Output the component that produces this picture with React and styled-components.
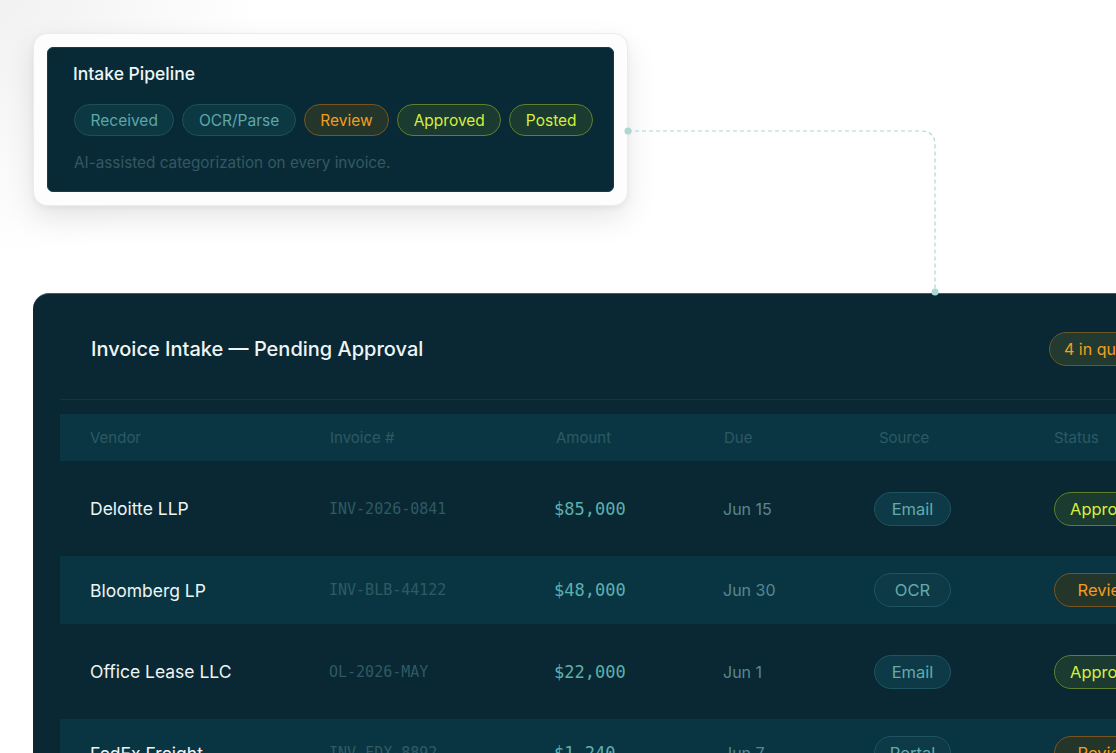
import React from "react";
import styled, {createGlobalStyle} from "styled-components";

const rows = [
    {vendor: "Deloitte LLP", invoice: "INV-2026-0841", amount: "$85,000", due: "Jun 15", source: "Email", status: "Approved"},
    {vendor: "Bloomberg LP", invoice: "INV-BLB-44122", amount: "$48,000", due: "Jun 30", source: "OCR", status: "Review"},
    {vendor: "Office Lease LLC", invoice: "OL-2026-MAY", amount: "$22,000", due: "Jun 1", source: "Email", status: "Approved"},
    {vendor: "FedEx Freight", invoice: "INV-FDX-8892", amount: "$1,240", due: "Jun 7", source: "Portal", status: "Review"},
];

const stages = [
    {label: "Received", tone: "teal"},
    {label: "OCR/Parse", tone: "teal"},
    {label: "Review", tone: "amber"},
    {label: "Approved", tone: "lime"},
    {label: "Posted", tone: "lime"},
];

const tones = {
    teal: {border: "#1d4f5a", bg: "#0c3843", color: "#5ea7a8"},
    amber: {border: "#7a5420", bg: "#243529", color: "#f39d1f"},
    lime: {border: "#5f7f2c", bg: "#1b3a30", color: "#d6ef3c"},
};

const statusTone = {Approved: "lime", Review: "amber"};

export default function App() {
    return (
        <>
            <GlobalStyle/>
            <Page>
                <Connector width="1116" height="300" viewBox="0 0 1116 300">
                    <path d="M628 131 H921 Q935 131 935 145 V292" fill="none" stroke="#a9d9d1" strokeWidth="1.2" strokeDasharray="4 3"/>
                    <circle cx="628" cy="131" r="3.5" fill="#a9d9d1"/>
                    <circle cx="935" cy="292" r="3.5" fill="#a9d9d1"/>
                </Connector>

                <PipelineFrame>
                    <PipelineCard>
                        <PipelineTitle>Intake Pipeline</PipelineTitle>
                        <PillRow>
                            {stages.map(s => <Pill key={s.label} tone={s.tone}>{s.label}</Pill>)}
                        </PillRow>
                        <Caption>AI-assisted categorization on every invoice.</Caption>
                    </PipelineCard>
                </PipelineFrame>

                <Panel>
                    <PanelHeader>
                        <PanelTitle>Invoice Intake — Pending Approval</PanelTitle>
                        <QueueBadge>4 in queue</QueueBadge>
                    </PanelHeader>

                    <TableHead>
                        <span>Vendor</span>
                        <span>Invoice #</span>
                        <span>Amount</span>
                        <span>Due</span>
                        <span>Source</span>
                        <span>Status</span>
                    </TableHead>

                    {rows.map((r, i) => (
                        <Row key={r.invoice} striped={i % 2 === 1}>
                            <Vendor>{r.vendor}</Vendor>
                            <InvoiceNo>{r.invoice}</InvoiceNo>
                            <Amount>{r.amount}</Amount>
                            <Due>{r.due}</Due>
                            <div><SourcePill>{r.source}</SourcePill></div>
                            <div><StatusPill tone={statusTone[r.status]}>{r.status}</StatusPill></div>
                        </Row>
                    ))}
                </Panel>
            </Page>
        </>
    );
}

const GlobalStyle = createGlobalStyle`
    html, body {
        margin: 0;
        overflow: hidden;
        background: #ffffff;
        font-family: Inter, "Noto Sans", sans-serif;
    }
`;

const Page = styled.div`
    position: relative;
    width: 1116px;
    height: 753px;
    overflow: hidden;
    padding: 33px 0 0 33px;
    box-sizing: border-box;
    background: radial-gradient(circle at 0 0, #f1f1f1 0, #ffffff 260px);
`;

const Connector = styled.svg`
    position: absolute;
    left: 0;
    top: 0;
    z-index: 2;
    pointer-events: none;
`;

const PipelineFrame = styled.div`
    width: 595px;
    box-sizing: border-box;
    padding: 13px;
    background: #fdfdfd;
    border: 1px solid #ececec;
    border-radius: 14px;
    box-shadow: 0 12px 30px rgba(0, 0, 0, 0.10), 0 2px 6px rgba(0, 0, 0, 0.05);
`;

const PipelineCard = styled.div`
    background: #082a36;
    border-radius: 6px;
    border: 1px solid #123e48;
    padding: 15px 20px 18px 25px;
    height: 145px;
    box-sizing: border-box;
`;

const PipelineTitle = styled.div`
    color: #eef5f5;
    font-size: 17.5px;
    font-weight: 500;
    line-height: 22px;
`;

const PillRow = styled.div`
    display: flex;
    gap: 8px;
    margin-top: 19px;
    margin-left: 1px;
`;

const Pill = styled.span`
    display: inline-flex;
    align-items: center;
    height: 32px;
    box-sizing: border-box;
    padding: 0 15.5px;
    border-radius: 16px;
    font-size: 15.5px;
    border: 1.5px solid ${p => tones[p.tone].border};
    background: ${p => tones[p.tone].bg};
    color: ${p => tones[p.tone].color};
`;

const Caption = styled.div`
    margin-top: 17px;
    margin-left: 1px;
    color: #355863;
    font-size: 15.3px;
`;

const Panel = styled.div`
    margin-top: 87px;
    width: 1140px;
    min-height: 500px;
    background: #092833;
    border-radius: 16px 0 0 0;
    border-top: 1px solid #3b5f69;
    padding: 0 0 0 27px;
    box-sizing: border-box;
`;

const PanelHeader = styled.div`
    display: flex;
    align-items: center;
    justify-content: space-between;
    height: 106px;
    padding: 5px 0 0 31px;
    box-sizing: border-box;
    border-bottom: 1px solid #0f3641;
`;

const PanelTitle = styled.div`
    color: #eef5f5;
    font-size: 20px;
    font-weight: 500;
`;

const QueueBadge = styled.span`
    display: inline-flex;
    align-items: center;
    height: 34px;
    box-sizing: border-box;
    padding: 0 14px;
    border-radius: 17px;
    border: 1.5px solid #6a5628;
    background: #233a30;
    color: #f2a022;
    font-size: 16px;
    white-space: nowrap;
    width: 96px;
    margin-right: 28px;
`;

const grid = `
    display: grid;
    grid-template-columns: 240px 226px 168px 155px 175px 1fr;
    align-items: center;
    padding-left: 30px;
`;

const TableHead = styled.div`
    ${grid};
    margin-top: 14px;
    height: 47px;
    background: #0a3643;
    color: #2d5965;
    font-size: 15px;
`;

const Row = styled.div`
    ${grid};
    height: ${p => p.striped ? 68 : 95}px;
    background: ${p => p.striped ? "#093543" : "transparent"};
`;

const Vendor = styled.div`
    color: #eef4f4;
    font-size: 17.5px;
`;

const InvoiceNo = styled.div`
    color: #2f5a64;
    font-family: "DejaVu Sans Mono", "Liberation Mono", monospace;
    font-size: 15px;
    margin-left: -1px;
`;

const Amount = styled.div`
    color: #5db0ad;
    font-family: "DejaVu Sans Mono", "Liberation Mono", monospace;
    font-size: 17px;
    font-weight: 500;
    margin-left: -2px;
`;

const Due = styled.div`
    color: #578790;
    font-size: 16px;
    margin-left: -1px;
`;

const SourcePill = styled.span`
    display: inline-flex;
    align-items: center;
    justify-content: center;
    min-width: 77px;
    height: 34px;
    box-sizing: border-box;
    padding: 0 14px;
    margin-left: -5px;
    border-radius: 17px;
    border: 1.5px solid #1f5360;
    background: #0d3a46;
    color: #62abac;
    font-size: 16.5px;
`;

const StatusPill = styled.span`
    display: inline-flex;
    align-items: center;
    justify-content: center;
    min-width: 103px;
    height: 34px;
    box-sizing: border-box;
    padding: 0 15px;
    border-radius: 17px;
    border: 1.5px solid ${p => tones[p.tone].border};
    background: ${p => tones[p.tone].bg};
    color: ${p => tones[p.tone].color};
    font-size: 16.5px;
    white-space: nowrap;
`;
